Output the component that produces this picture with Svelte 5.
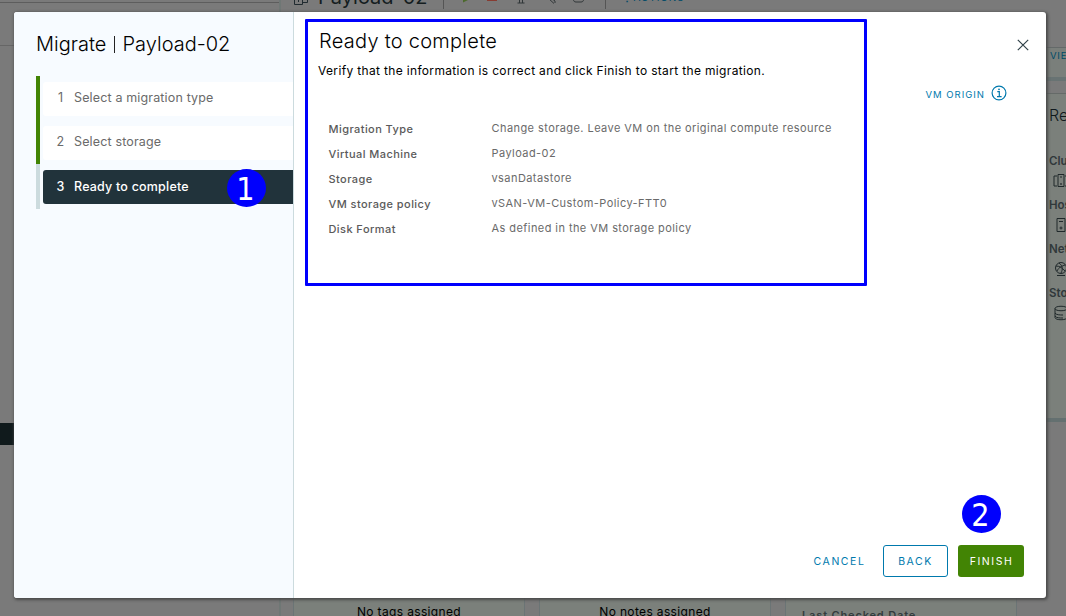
<script>
  const steps = [
    { n: 1, label: 'Select a migration type' },
    { n: 2, label: 'Select storage' },
    { n: 3, label: 'Ready to complete', active: true }
  ];
  const summary = [
    ['Migration Type', 'Change storage. Leave VM on the original compute resource'],
    ['Virtual Machine', 'Payload-02'],
    ['Storage', 'vsanDatastore'],
    ['VM storage policy', 'vSAN-VM-Custom-Policy-FTT0'],
    ['Disk Format', 'As defined in the VM storage policy']
  ];
</script>

<div class="screen">
  <div class="page">
    <aside><div class="tree-head"></div><div class="tree-body"></div><div class="selected-row"></div></aside>
    <main>
      <header>
        <svg class="vm" width="16" height="16" viewBox="0 0 16 16" fill="none" stroke="#202b30"><path d="M1.500 2v11.500h8V2M5.500 11V4h9v7.500h-5"/></svg>
        <span class="vm-name">Payload-02</span>
        <i class="rule"></i>
        <svg class="tools" width="116" height="16" viewBox="0 0 116 16" fill="none">
          <path d="M1 4l6 4.500-6 3z" fill="#4c6a2c"/><path d="M25 5h10v5H25z" fill="#873c32"/>
          <path d="M57.500 4v8m3-8v8m-5 0h7" stroke="#303638"/><path d="M86 7l6 5.500M89 7l4 3v2" stroke="#303638"/><path d="M114 7c2 1 2 4-1 4h-5c-3 0-3-3-1-4M109 8h4" transform="translate(6)" stroke="#303638"/>
        </svg>
        <i class="rule second"></i><span class="actions"><b>⋮</b> ACTIONS</span>
      </header>
      <div class="related">
        <div class="view">VIEW</div>
        <section>
          <h3>Related</h3>
          <h4>Cluster</h4>
          <svg width="16" height="16" viewBox="0 0 16 16"><path d="M4 3H1v10h3M12 3h3v10h-3M5 1.500h6v12H5zM7 4h2"/><circle cx="8" cy="11" r=".5"/></svg>
          <h4>Host</h4>
          <svg width="16" height="16" viewBox="0 0 16 16"><path d="M4 1.500h8v13H4zM6 4.500h4"/><circle cx="8" cy="11" r="1"/></svg>
          <h4>Networks</h4>
          <svg width="16" height="16" viewBox="0 0 16 16"><circle cx="8" cy="7" r="5.500"/><path d="M3 5c4 0 6 2 9 5M4 10c2-4 5-5 8-6M6 2c4 3 4 6 2 10M4 14.500h8"/></svg>
          <h4>Storage</h4>
          <svg width="16" height="16" viewBox="0 0 16 16"><path d="M2 3.500v9c0 3 12 3 12 0v-9c0-3-12-3-12 0 0 3 12 3 12 0M2 8c1 2 5 2 8 2M2 11c1 2 5 2 8 2"/></svg>
        </section>
      </div>
      <div class="cards">
        <div>No tags assigned</div><div>No notes assigned</div><div class="checked">Last Checked Date</div>
      </div>
    </main>
  </div>

  <div class="dialog">
    <nav>
      <h1>Migrate <i></i> Payload-02</h1>
      <ol>
        {#each steps as s}
          <li class:active={s.active}><div class="step"><span class="num">{s.n}</span><span>{s.label}</span></div></li>
        {/each}
      </ol>
    </nav>
    <div class="content">
      <div class="upper">
        <section class="details">
          <h2>Ready to complete</h2>
          <p>Verify that the information is correct and click Finish to start the migration.</p>
          <dl>
            {#each summary as [k, v]}
              <dt>{k}</dt><dd>{v}</dd>
            {/each}
          </dl>
        </section>
        <div class="right">
          <svg class="close" width="12" height="12" viewBox="0 0 12 12"><path d="M.8.8l10.400 10.400M11.200.8L.8 11.200"/></svg>
          <div class="origin"><span>VM ORIGIN</span>
            <svg width="16" height="16" viewBox="0 0 16 16" fill="none" stroke="#0079ad"><circle cx="8" cy="8" r="6.900" stroke-width="1.200"/><path d="M6.300 6.700h2v5M6 11.700h4.600" stroke-width="1.200"/><circle cx="8" cy="4.300" r=".9" fill="#0079ad" stroke="none"/></svg>
          </div>
        </div>
      </div>
      <footer>
        <button class="cancel">CANCEL</button><button class="back">BACK</button><button class="finish">FINISH</button>
      </footer>
    </div>
  </div>
  <div class="marker one">1</div>
  <div class="marker two">2</div>
</div>

<style>
  * { box-sizing: border-box; }
  .screen { position: relative; width: 1066px; height: 616px; overflow: hidden; background: #7a7a7a; font-family: Inter, sans-serif; color: #000; }
  h1, h2, h3, h4, p, dl, dd, ol { margin: 0; padding: 0; font-weight: 400; }
  .page { display: flex; height: 616px; }
  aside { flex: none; width: 281px; border-right: 2px solid #6f7775; }
  .tree-head { height: 3px; border-bottom: 1px solid #5d5d5d; }
  .tree-body { height: 420px; border-top: 42px solid #7a7a7a; box-shadow: inset 0 1px #666; }
  .selected-row { height: 22px; background: #101a1c; }
  main { flex: none; width: 785px; height: 616px; display: flex; flex-direction: column; overflow: hidden; }
  header { flex: none; height: 47px; display: flex; align-items: flex-start; padding-left: 12px; }
  header svg { margin-top: -9px; flex: none; }
  .vm-name { font-size: 20px; line-height: 24px; margin: -15px 15px 0 9px; color: #141d20; width: 110px; }
  .rule { width: 1px; height: 9px; background: #555; }
  .tools { margin-left: 18px; overflow: visible; }
  .second { margin-left: 27px; }
  .actions { font-size: 10px; line-height: 14px; color: #004b68; margin: -10px 0 0 16px; letter-spacing: .9px; word-spacing: -3px; white-space: nowrap; }
  .related { flex: none; width: 30px; height: 375px; margin-left: 764px; border-top: 1px solid #646969; }
  .view { height: 33px; border-bottom: 4px solid #687373; background: #7a7f7b; font-size: 9.500px; line-height: 15px; letter-spacing: .8px; padding-left: 5px; color: #004b68; overflow: hidden; }
  .related section { height: 329px; margin-top: 12px; padding: 9px 0 0 4px; border-top: 1px solid #656a68; border-bottom: 4px solid #647070; background: #7b807b; overflow: hidden; }
  h3 { font-size: 16px; font-weight: 300; line-height: 24px; color: #10191d; margin-bottom: 26px; }
  h4 { font-size: 11.500px; line-height: 16px; font-weight: 600; color: #30383a; height: 14px; margin-bottom: 6px; white-space: nowrap; }
  .related section svg { display: block; margin: 0 0 8px 4px; fill: none; stroke: #20292b; }
  .cards { flex: none; display: flex; gap: 14px; margin: 176px 0 0 12px; }
  .cards div { width: 232px; height: 30px; border: 1px solid #6b7475; border-top: 0; border-bottom: 0; background: #7b807b; text-align: center; padding-top: 6px; font-size: 12px; line-height: 16px; letter-spacing: .35px; white-space: nowrap; }
  .cards .checked { text-align: left; padding: 9px 0 0 16px; font-size: 11px; font-weight: 600; color: #333b3d; letter-spacing: .85px; }

  .dialog { position: absolute; left: 14px; top: 12px; width: 1032px; height: 586px; background: #fff; border-radius: 3px; box-shadow: 1px 1px 3px 1px #4a4a4a; display: flex; overflow: hidden; }
  nav { width: 280px; background: #f7fbff; border-right: 1px solid #ccdbde; padding: 20px 0 0 22px; }
  h1 { font-size: 20px; font-weight: 300; line-height: 24px; height: 44px; white-space: nowrap; color: #000; }
  h1 i { display: inline-block; width: 1px; height: 17px; background: #222; margin: 0 2px; vertical-align: -2px; }
  ol { list-style: none; }
  li { height: 44px; border-left: 4px solid #428404; padding: 6px 0 4px 3px; }
  li.active { height: 45px; border-color: #ccdbde; }
  .step { height: 34px; background: #fff; border-radius: 3px 0 0 3px; display: flex; align-items: center; padding-bottom: 3px; font-size: 12.500px; letter-spacing: .15px; color: #6a6a6a; }
  .num { width: 31px; text-align: center; padding-left: 4px; }
  .active .step { background: #21333b; color: #fff; font-weight: 500; padding-bottom: 1px; letter-spacing: .2px; }
  .content { width: 752px; display: flex; flex-direction: column; justify-content: space-between; padding: 7px 22px 21px 11px; }
  .upper { display: flex; justify-content: space-between; }
  .details { width: 562px; height: 267px; border: 3px solid #0000fd; border-radius: 1px; padding: 7px 0 0 10px; white-space: nowrap; }
  h2 { font-size: 20px; font-weight: 300; line-height: 24px; padding-left: 1px; letter-spacing: .27px; }
  .details p { font-size: 12px; line-height: 16px; margin-top: 10px; letter-spacing: .34px; }
  dl { display: grid; grid-template-columns: 163px 1fr; grid-auto-rows: 25px; margin: 41px 0 0 10.500px; font-size: 11px; line-height: 16px; letter-spacing: .43px; color: #6a6a6a; }
  dt { padding-top: 1px; font-weight: 500; color: #5a5a5a; }
  .right { padding-top: 20px; display: flex; flex-direction: column; align-items: flex-end; }
  .close { margin-right: -5px; stroke: #304249; stroke-width: 1.200; }
  .origin { display: flex; align-items: center; gap: 6px; margin: 34px 17px 0 0; color: #0079ad; font-size: 9.500px; letter-spacing: 1px; }
  .origin span { padding-top: 2px; }
  footer { display: flex; justify-content: flex-end; }
  button { height: 32px; border: 0; border-radius: 3px; padding: 0; font-family: inherit; font-size: 10.500px; letter-spacing: 1.550px; font-weight: 400; background: none; color: #0079ad; text-indent: 1px; }
  .cancel { width: 64px; margin-right: 12px; }
  .back { width: 65px; border: 1px solid #0079ad; margin-right: 10px; text-indent: 0; }
  .finish { width: 66px; background: #428404; color: #fff; }
  .marker { position: absolute; width: 39px; height: 38px; border-radius: 50%; background: #0000fd; color: #fff; font: 32px/40px "DejaVu Sans Condensed", "DejaVu Sans", sans-serif; font-stretch: condensed; text-align: center; text-indent: -2px; }
  .one { left: 227px; top: 169px; }
  .two { left: 962px; top: 495px; }
</style>
